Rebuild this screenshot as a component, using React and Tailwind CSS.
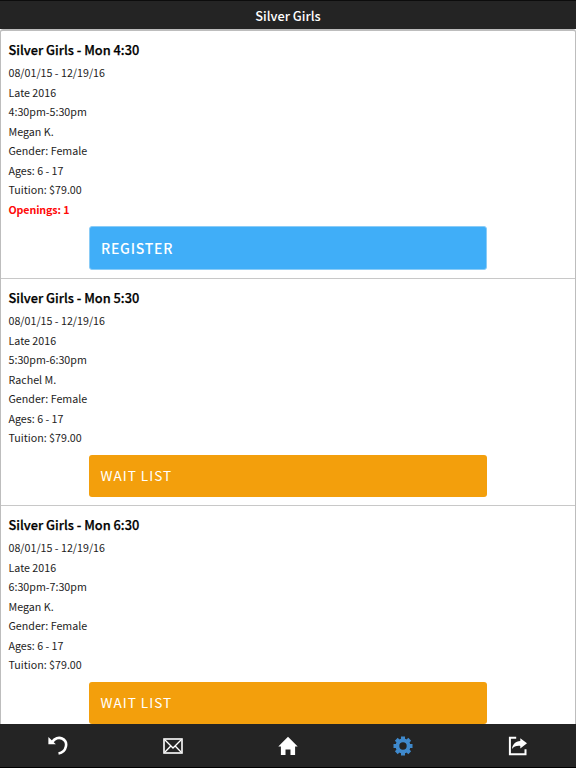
import React from 'react';

const classes = [
  {
    title: 'Silver Girls - Mon 4:30',
    details: ['08/01/15 - 12/19/16', 'Late 2016', '4:30pm-5:30pm', 'Megan K.', 'Gender: Female', 'Ages: 6 - 17', 'Tuition: $79.00'],
    openings: 1,
  },
  {
    title: 'Silver Girls - Mon 5:30',
    details: ['08/01/15 - 12/19/16', 'Late 2016', '5:30pm-6:30pm', 'Rachel M.', 'Gender: Female', 'Ages: 6 - 17', 'Tuition: $79.00'],
    openings: 0,
  },
  {
    title: 'Silver Girls - Mon 6:30',
    details: ['08/01/15 - 12/19/16', 'Late 2016', '6:30pm-7:30pm', 'Megan K.', 'Gender: Female', 'Ages: 6 - 17', 'Tuition: $79.00'],
    openings: 0,
  },
];

function ClassCard({ item }) {
  return (
    <li className="h-[227px] shrink-0 border-t border-[#c8c8c8] px-[7.5px] pt-2 first:h-[248px] first:border-t-0 first:pt-[9px]">
      <h2 className="h-[22px] text-[12.8px] leading-[22px] font-medium text-black [-webkit-text-stroke:0.25px_#000]">{item.title}</h2>
      <div className="mt-[2.4px] text-[10.7px] leading-[19.45px] text-[#1c1c1c]">
        {item.details.map((line) => (
          <p key={line}>{line}</p>
        ))}
        {item.openings > 0 ? (
          <p className="font-bold tracking-[-0.12px] text-[#ff0a0a]">Openings: {item.openings}</p>
        ) : null}
      </div>
      {item.openings > 0 ? (
        <button className="mt-[6.5px] ml-[80.5px] block h-11 w-[397.5px] rounded-[3px] border border-[#8accf7] bg-[#40aef8] px-[11px] text-left text-[14px] leading-none font-medium tracking-[0.75px] text-white">
          REGISTER
        </button>
      ) : (
        <button className="mt-[7.5px] ml-[80.5px] block h-[42px] w-[397.5px] rounded-[3px] bg-[#f39f0c] px-[11.5px] pb-px text-left text-[13.6px] leading-none tracking-[1px] text-white">
          WAIT LIST
        </button>
      )}
    </li>
  );
}

function BackIcon() {
  return (
    <svg width="20" height="20" viewBox="0 0 20 20" fill="none">
      <path d="M4.4 5.8C6.6 2.2 10.8 1 14 2.5c3.2 1.5 4.6 4.8 3.9 8-.8 3.7-3.8 6.400-7.400 7" stroke="#fff" strokeWidth="2.6" />
      <path d="M.4 1v7.2h7.4z" fill="#fff" />
    </svg>
  );
}

function MailIcon() {
  return (
    <svg width="20" height="16" viewBox="0 0 20 16" fill="none" stroke="#fff">
      <rect x="1" y="1" width="18" height="14" strokeWidth="1.6" />
      <path d="M2 2l8 8 8-8M2 14l5.8-6M18 14l-5.8-6" strokeWidth="1.3" />
    </svg>
  );
}

function HomeIcon() {
  return (
    <svg width="20" height="20" viewBox="0 0 20 20" fill="#fff">
      <path d="M10 .8L.3 10.5h2.6V19h4.6v-5.5h5V19h4.6v-8.5h2.6z" />
    </svg>
  );
}

function GearIcon() {
  return (
    <svg width="20" height="20" viewBox="0 0 20 20" fill="none">
      <circle cx="10" cy="10" r="5.6" stroke="#3f89cc" strokeWidth="3.8" />
      <g fill="#3f89cc">
        <path d="M8 .5h4V4H8zM8 16h4v3.500H8zM.5 8H4v4H.5zM16 8h3.500v4H16z" />
        <path d="M8 .5h4V4H8zM8 16h4v3.500H8zM.5 8H4v4H.5zM16 8h3.500v4H16z" transform="rotate(45 10 10)" />
      </g>
    </svg>
  );
}

function ShareIcon() {
  return (
    <svg width="20" height="20" viewBox="0 0 20 20" fill="none">
      <path d="M8.2 1.7H1.9v16.5h15.6v-5" stroke="#fff" strokeWidth="2" />
      <path d="M12.3 2.3L19 7.3l-6.700 5.200V9.900c-4-.3-6.400.6-8.300 3.200.3-4.700 3.300-7.800 8.300-8.200z" fill="#fff" />
    </svg>
  );
}

const tabs = [
  { name: 'Back', Icon: BackIcon },
  { name: 'Messages', Icon: MailIcon },
  { name: 'Home', Icon: HomeIcon },
  { name: 'Settings', Icon: GearIcon },
  { name: 'Share', Icon: ShareIcon },
];

function App() {
  return (
    <div className="flex h-[768px] w-[576px] flex-col overflow-hidden bg-[#242424] font-['Noto_Sans_CJK_SC',sans-serif]">
      <header className="flex h-[29px] shrink-0 items-center justify-center border-t border-[#0c0c0c] pt-[2px]">
        <h1 className="text-[12.8px] leading-none font-medium text-white">Silver Girls</h1>
      </header>

      <main className="min-h-0 flex-1 overflow-hidden bg-white">
        <ul className="flex flex-col rounded-t-[3px] border border-t-2 border-[#bdbdbd] [&>li:first-child]:-mt-px">
          {classes.map((item) => (
            <ClassCard key={item.title} item={item} />
          ))}
        </ul>
      </main>

      <nav className="grid h-11 shrink-0 grid-cols-5 border-b border-black">
        {tabs.map(({ name, Icon }) => (
          <button key={name} aria-label={name} className="flex items-center justify-center">
            <Icon />
          </button>
        ))}
      </nav>
    </div>
  );
}

export default App;
